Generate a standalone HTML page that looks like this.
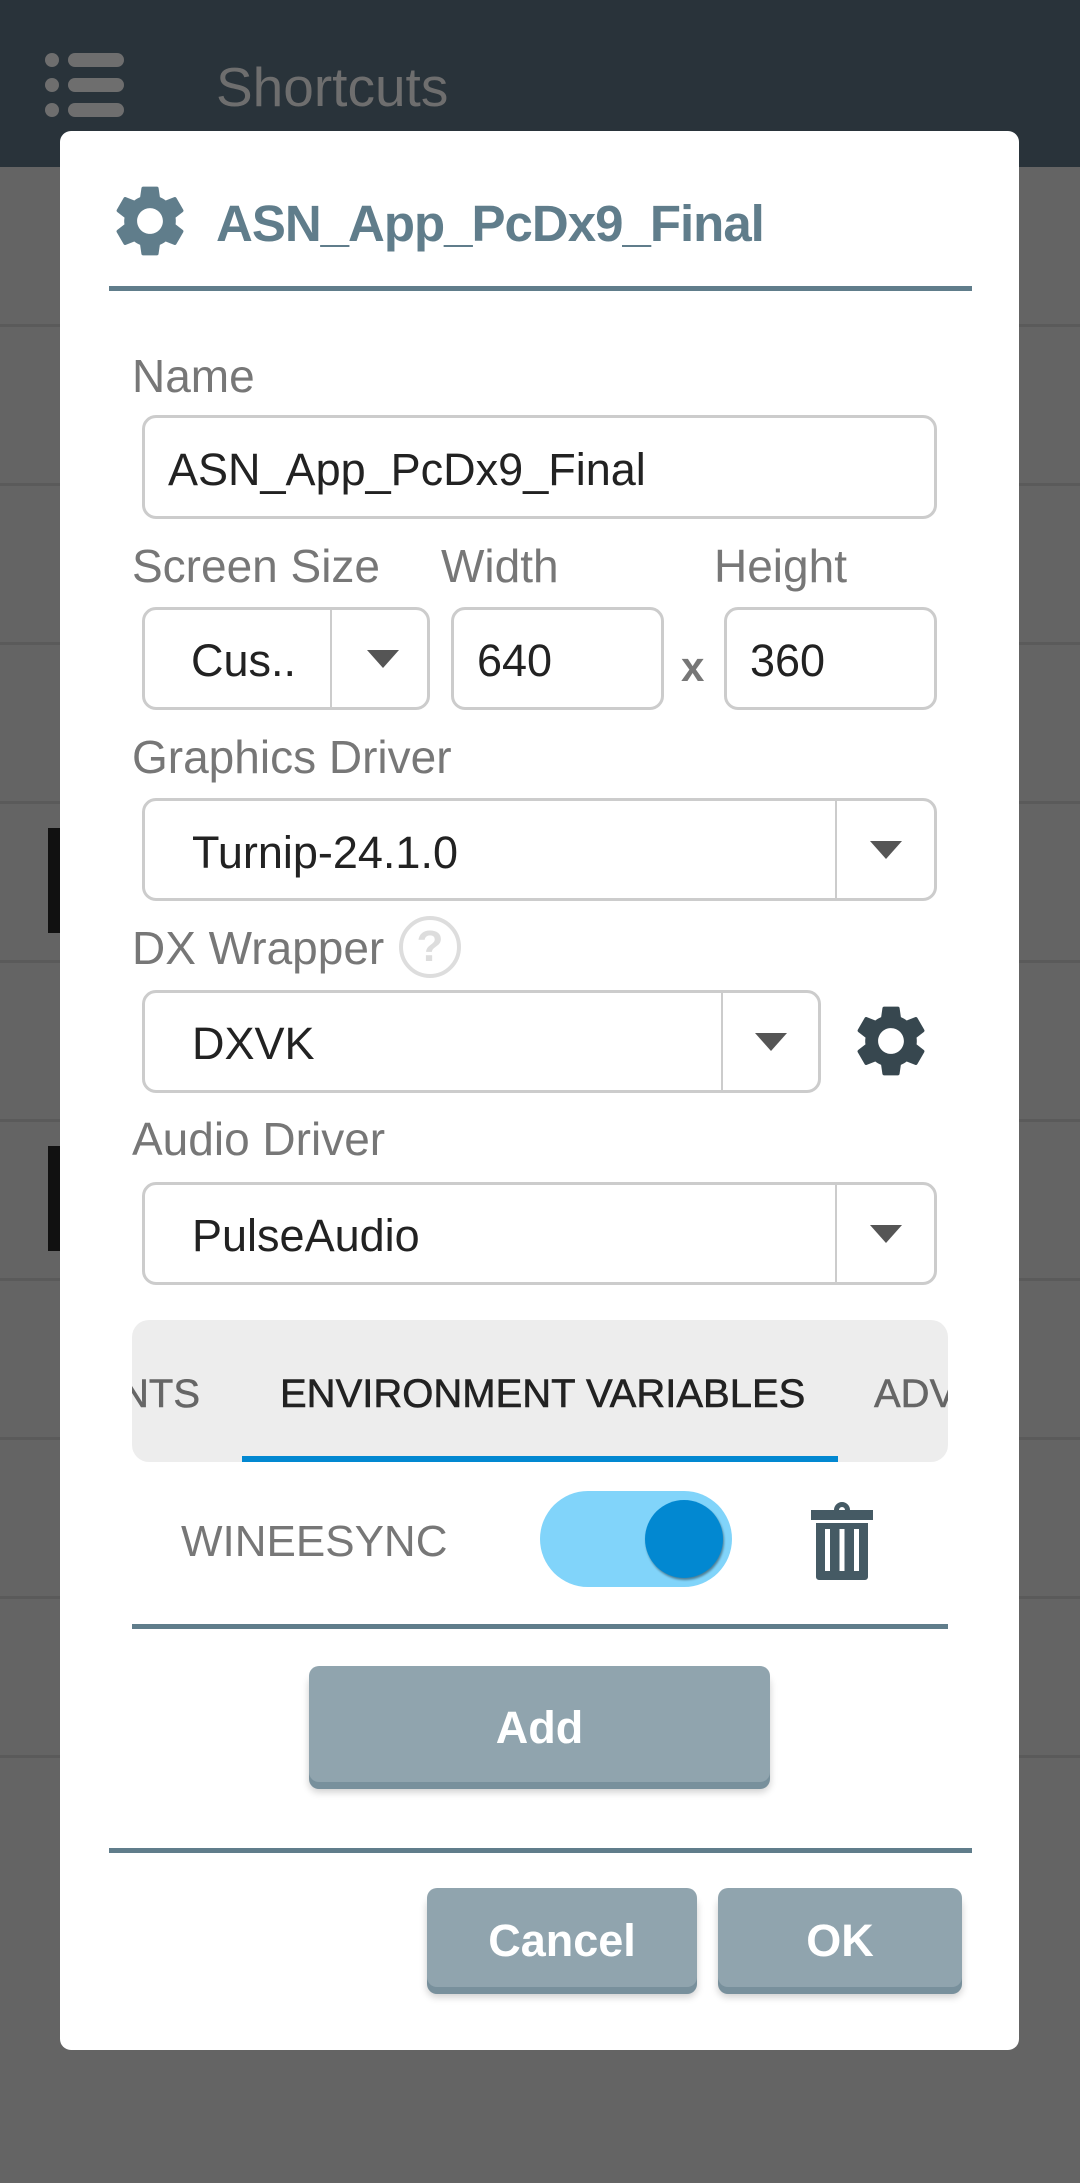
<!DOCTYPE html>
<html><head><meta charset="utf-8"><style>
*{margin:0;padding:0;box-sizing:border-box}
body{width:1080px;height:2183px;background:#646464;position:relative;overflow:hidden;font-family:"Liberation Sans",sans-serif}
.a{position:absolute}
.lbl{position:absolute;font-size:46px;color:#777;line-height:1}
.box{position:absolute;border:3px solid #ccc;border-radius:14px;background:#fff}
.txt{position:absolute;font-size:45px;color:#222;line-height:1}
.div{position:absolute;top:0;bottom:0;width:2px;background:#ccc}
.arr{position:absolute;width:0;height:0;border-left:16px solid transparent;border-right:16px solid transparent;border-top:18px solid #555}
.sep{position:absolute;left:0;width:1080px;height:3px;background:#5a5a5a}
.btn{position:absolute;background:#90a4ae;border-radius:10px;box-shadow:0 7px 0 #78909c,0 10px 8px rgba(0,0,0,.2);color:#fff;font-weight:bold;font-size:45px;text-align:center}
</style></head><body>
<div class="a" style="left:0;top:0;width:1080px;height:167px;background:#29333a"></div>
<div class="a" style="left:45px;top:53px;width:14px;height:14px;border-radius:7px;background:#6e6e6e"></div>
<div class="a" style="left:68px;top:53px;width:56px;height:14px;border-radius:7px;background:#6e6e6e"></div>
<div class="a" style="left:45px;top:78px;width:14px;height:14px;border-radius:7px;background:#6e6e6e"></div>
<div class="a" style="left:68px;top:78px;width:56px;height:14px;border-radius:7px;background:#6e6e6e"></div>
<div class="a" style="left:45px;top:103px;width:14px;height:14px;border-radius:7px;background:#6e6e6e"></div>
<div class="a" style="left:68px;top:103px;width:56px;height:14px;border-radius:7px;background:#6e6e6e"></div>
<div class="a" style="left:216px;top:55px;font-size:55px;color:#6e6e6e">Shortcuts</div>
<div class="sep" style="top:324px"></div><div class="sep" style="top:483px"></div><div class="sep" style="top:642px"></div><div class="sep" style="top:801px"></div><div class="sep" style="top:960px"></div><div class="sep" style="top:1119px"></div><div class="sep" style="top:1278px"></div><div class="sep" style="top:1437px"></div><div class="sep" style="top:1596px"></div><div class="sep" style="top:1755px"></div>
<div class="a" style="left:48px;top:828px;width:14px;height:105px;background:#111"></div>
<div class="a" style="left:48px;top:1146px;width:14px;height:105px;background:#111"></div>

<div class="a" style="left:60px;top:131px;width:959px;height:1919px;background:#fff;border-radius:11px"></div>
<svg class="a" style="left:107px;top:178px" width="86" height="86" viewBox="0 0 24 24"><path fill="#607d8b" d="M19.14 12.94c.04-.3.06-.61.06-.94 0-.32-.02-.64-.07-.94l2.03-1.58a.49.49 0 0 0 .12-.61l-1.920-3.32a.488.488 0 0 0-.59-.22l-2.39.96c-.5-.38-1.03-.7-1.62-.94l-.36-2.54a.484.484 0 0 0-.48-.41h-3.84c-.24 0-.43.17-.47.41l-.36 2.54c-.59.24-1.13.57-1.62.94l-2.39-.96c-.22-.08-.47 0-.59.22L2.74 8.87c-.12.21-.08.47.12.61l2.03 1.58c-.05.3-.09.63-.09.94s.02.64.07.94l-2.03 1.58a.49.49 0 0 0-.12.61l1.92 3.32c.12.22.37.29.59.22l2.39-.96c.5.38 1.03.7 1.62.94l.36 2.54c.05.24.24.41.48.41h3.84c.24 0 .44-.17.47-.41l.36-2.54c.59-.24 1.13-.56 1.62-.94l2.39.96c.22.08.47 0 .59-.22l1.92-3.32c.12-.22.07-.47-.12-.61l-2.01-1.58zM12 15.6c-1.98 0-3.6-1.62-3.6-3.6s1.62-3.6 3.6-3.6 3.6 1.62 3.6 3.6-1.62 3.6-3.6 3.6z"/></svg>
<div class="a" style="left:216px;top:194px;font-size:51px;font-weight:bold;color:#607d8b;letter-spacing:-1px">ASN_App_PcDx9_Final</div>
<div class="a" style="left:109px;top:286px;width:863px;height:5px;background:#607d8b"></div>

<div class="lbl" style="left:132px;top:353px">Name</div>
<div class="box" style="left:142px;top:415px;width:795px;height:104px"></div>
<div class="txt" style="left:168px;top:447px">ASN_App_PcDx9_Final</div>

<div class="lbl" style="left:132px;top:543px">Screen Size</div>
<div class="lbl" style="left:441px;top:543px">Width</div>
<div class="lbl" style="left:714px;top:543px">Height</div>
<div class="box" style="left:142px;top:607px;width:288px;height:103px"><div class="div" style="left:185px"></div><div class="arr" style="left:222px;top:40px"></div></div>
<div class="txt" style="left:191px;top:638px">Cus..</div>
<div class="box" style="left:451px;top:607px;width:213px;height:103px"></div>
<div class="txt" style="left:477px;top:638px">640</div>
<div class="a" style="left:681px;top:643px;font-size:42px;font-weight:bold;color:#777">x</div>
<div class="box" style="left:724px;top:607px;width:213px;height:103px"></div>
<div class="txt" style="left:750px;top:638px">360</div>

<div class="lbl" style="left:132px;top:734px">Graphics Driver</div>
<div class="box" style="left:142px;top:798px;width:795px;height:103px"><div class="div" style="left:690px"></div><div class="arr" style="left:725px;top:40px"></div></div>
<div class="txt" style="left:192px;top:830px">Turnip-24.1.0</div>

<div class="lbl" style="left:132px;top:925px">DX Wrapper</div>
<div class="a" style="left:399px;top:916px;width:62px;height:62px;border:4px solid #ddd;border-radius:50%;color:#ddd;font-weight:bold;font-size:44px;text-align:center;line-height:54px">?</div>
<div class="box" style="left:142px;top:990px;width:679px;height:103px"><div class="div" style="left:576px"></div><div class="arr" style="left:610px;top:40px"></div></div>
<div class="txt" style="left:192px;top:1021px">DXVK</div>
<svg class="a" style="left:848px;top:998px" width="86" height="86" viewBox="0 0 24 24"><path fill="#37474f" d="M19.14 12.94c.04-.3.06-.61.06-.94 0-.32-.02-.64-.07-.94l2.03-1.58a.49.49 0 0 0 .12-.61l-1.92-3.32a.488.488 0 0 0-.59-.22l-2.39.96c-.5-.38-1.03-.7-1.62-.94l-.36-2.54a.484.484 0 0 0-.48-.41h-3.84c-.24 0-.43.17-.47.41l-.36 2.54c-.59.24-1.13.57-1.62.94l-2.39-.96c-.22-.08-.47 0-.59.22L2.74 8.87c-.12.21-.08.47.12.61l2.03 1.58c-.05.3-.09.63-.09.94s.02.64.07.94l-2.03 1.58a.49.49 0 0 0-.12.61l1.92 3.32c.12.22.37.29.59.22l2.39-.96c.5.38 1.03.7 1.62.94l.36 2.54c.05.24.24.41.48.41h3.84c.24 0 .44-.17.47-.41l.36-2.54c.59-.24 1.13-.56 1.62-.94l2.39.96c.22.08.47 0 .59-.22l1.92-3.32c.12-.22.07-.47-.12-.61l-2.01-1.58zM12 15.6c-1.98 0-3.6-1.62-3.6-3.6s1.62-3.6 3.6-3.6 3.6 1.62 3.6 3.6-1.62 3.6-3.6 3.6z"/></svg>

<div class="lbl" style="left:132px;top:1116px">Audio Driver</div>
<div class="box" style="left:142px;top:1182px;width:795px;height:103px"><div class="div" style="left:690px"></div><div class="arr" style="left:725px;top:40px"></div></div>
<div class="txt" style="left:192px;top:1213px">PulseAudio</div>

<div class="a" style="left:132px;top:1320px;width:816px;height:142px;background:#ededed;border-radius:17px;overflow:hidden">
<div class="a" style="left:-12px;top:52px;font-size:40px;color:#666;white-space:nowrap;-webkit-text-stroke:.5px #666">NTS</div>
<div class="a" style="left:148px;top:52px;font-size:40px;color:#222;white-space:nowrap;-webkit-text-stroke:.6px #222">ENVIRONMENT VARIABLES</div>
<div class="a" style="left:742px;top:52px;font-size:40px;color:#666;white-space:nowrap;-webkit-text-stroke:.5px #666">ADV</div>
<div class="a" style="left:110px;top:136px;width:596px;height:6px;background:#0288d1"></div>
</div>

<div class="a" style="left:181px;top:1517px;font-size:44px;color:#777">WINEESYNC</div>
<div class="a" style="left:540px;top:1491px;width:192px;height:96px;border-radius:48px;background:#81d4fa"></div>
<div class="a" style="left:645px;top:1500px;width:78px;height:78px;border-radius:50%;background:#0288d1;box-shadow:1px 2px 2px rgba(0,0,0,.4)"></div>
<svg class="a" style="left:808px;top:1500px" width="68" height="80" viewBox="0 0 68 80"><path fill="#455a64" d="M26 10 a8 8 0 0 1 16 0 h-5 a3 3 0 0 0-6 0z M3 10h62v10H3z M8 23h52v54a3 3 0 0 1-3 3H11a3 3 0 0 1-3-3z"/><path fill="#fff" d="M17 29h5v42h-5zM31.5 29h5v42h-5zM46 29h5v42h-5z"/></svg>
<div class="a" style="left:132px;top:1624px;width:816px;height:5px;background:#607d8b"></div>

<div class="btn" style="left:309px;top:1666px;width:461px;height:116px;line-height:124px">Add</div>
<div class="a" style="left:109px;top:1848px;width:863px;height:5px;background:#607d8b"></div>
<div class="btn" style="left:427px;top:1888px;width:270px;height:99px;line-height:106px">Cancel</div>
<div class="btn" style="left:718px;top:1888px;width:244px;height:99px;line-height:106px">OK</div>
</body></html>
